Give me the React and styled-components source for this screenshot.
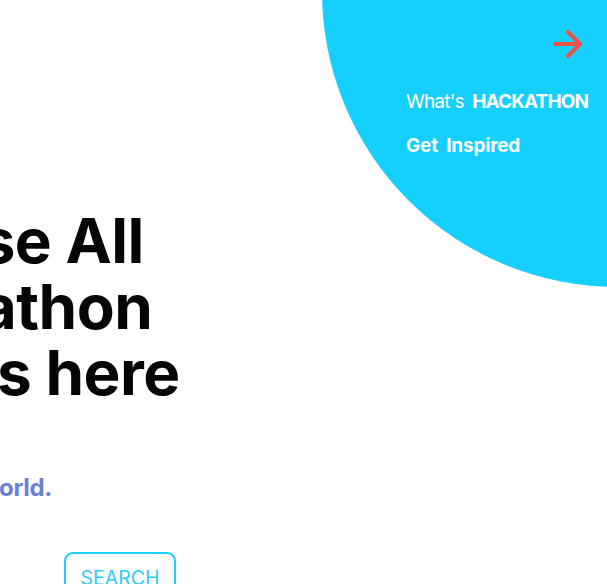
import React from 'react';
import styled, { createGlobalStyle } from 'styled-components';

const GlobalStyle = createGlobalStyle`
  html, body {
    margin: 0;
    padding: 0;
    background: #fff;
    overflow: hidden;
  }
  body {
    font-family: Inter, "Noto Sans", sans-serif;
  }
`;

const Page = styled.div`
  position: relative;
  width: 607px;
  height: 584px;
  overflow: hidden;
  background: #fff;
`;

const Blob = styled.div`
  position: absolute;
  left: 322px;
  top: -304px;
  width: 591px;
  height: 591px;
  border-radius: 50%;
  background: #15d0fe;
`;

const Header = styled.header`
  position: relative;
  display: flex;
  justify-content: flex-end;
  padding: 29px 19px 0 0;
`;

const Nav = styled.nav`
  width: 182px;
  display: flex;
  flex-direction: column;
`;

const ArrowButton = styled.button`
  align-self: flex-end;
  margin-right: 5px;
  padding: 0;
  border: 0;
  background: none;
  width: 30px;
  height: 30px;
  cursor: pointer;
`;

const NavLinks = styled.ul`
  list-style: none;
  margin: 31px 0 0;
  padding: 0;
  display: flex;
  flex-direction: column;
  gap: 20px;
`;

const NavLink = styled.li`
  color: #fff;
  font-size: 19px;
  line-height: 24px;
  font-weight: ${(p) => (p.$bold ? 700 : 400)};
  letter-spacing: ${(p) => (p.$bold ? '-0.2px' : '-0.8px')};
  word-spacing: 4px;
  white-space: nowrap;
  b {
    font-weight: 700;
    letter-spacing: -0.9px;
  }
`;

const Hero = styled.section`
  position: relative;
  margin: 50px 0 0 -172px;
  display: flex;
  flex-direction: column;
`;

const Title = styled.h1`
  margin: 0;
  font-size: 62px;
  line-height: 66px;
  font-weight: 700;
  color: #050505;
  letter-spacing: -0.5px;
`;

const Subtitle = styled.p`
  margin: 67px 0 0;
  width: 224px;
  display: flex;
  justify-content: flex-end;
  font-size: 24px;
  font-weight: 700;
  color: #6a7fd6;
  letter-spacing: -0.3px;
  white-space: nowrap;
`;

const Actions = styled.div`
  display: flex;
  margin: 50px 0 0 236px;
`;

const SearchButton = styled.button`
  width: 112px;
  height: 48px;
  border: 2px solid #1bd0ff;
  border-radius: 9px;
  background: #fff;
  color: #2ccdf6;
  font-family: Inter, "Noto Sans", sans-serif;
  font-size: 19.5px;
  font-weight: 400;
  padding: 12px 0 0;
  display: flex;
  justify-content: center;
  align-items: flex-start;
  cursor: pointer;
`;

const Arrow = () => (
  <svg width="30" height="30" viewBox="0 0 30 30" fill="none">
    <path
      d="M2 15h24M15 3l12 12-12 12"
      stroke="#f04d44"
      strokeWidth="4"
      strokeLinecap="round"
      strokeLinejoin="round"
    />
  </svg>
);

export default function App() {
  return (
    <>
      <GlobalStyle />
      <Page>
        <Blob />
        <Header>
          <Nav>
            <ArrowButton aria-label="next">
              <Arrow />
            </ArrowButton>
            <NavLinks>
              <NavLink>
                What's <b>HACKATHON</b>
              </NavLink>
              <NavLink $bold>Get Inspired</NavLink>
            </NavLinks>
          </Nav>
        </Header>
        <Hero>
          <Title>
            Browse All
            <br />
            Hackathon
            <br />
            Events here
          </Title>
          <Subtitle>
            <span>Join hackers from all over the world.</span>
          </Subtitle>
          <Actions>
            <SearchButton>SEARCH</SearchButton>
          </Actions>
        </Hero>
      </Page>
    </>
  );
}
